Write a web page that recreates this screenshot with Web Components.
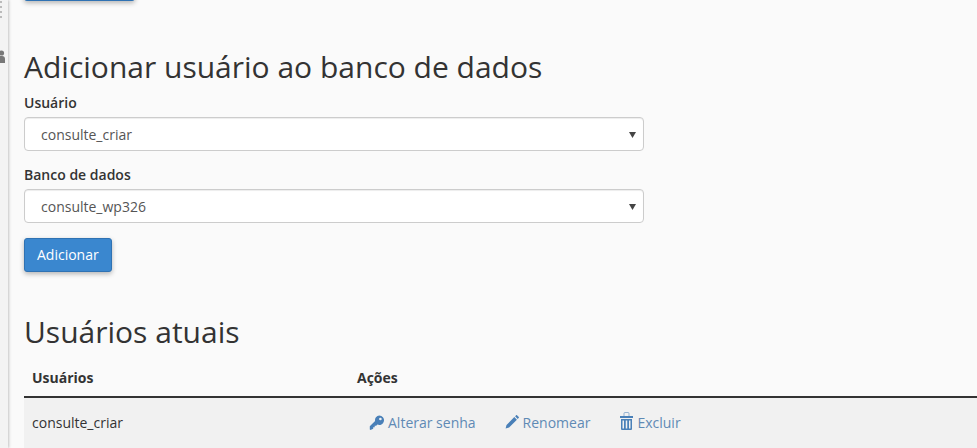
<!DOCTYPE html>
<html lang="pt"><head><meta charset="utf-8"><title>Usuários</title>
<style>
html,body{margin:0;height:100%;overflow:hidden}
body{font-family:"Open Sans",sans-serif;color:#333;background:#fafafa}
</style></head><body>
<app-shell>
  <side-rail slot="rail"></side-rail>
  <blue-button class="top" clip></blue-button>
  <section-title style="--mt:48px">Adicionar usuário ao banco de dados</section-title>
  <select-field label="Usuário" value="consulte_criar" style="--mt:8px"></select-field>
  <select-field label="Banco de dados" value="consulte_wp326" style="--mt:14px"></select-field>
  <blue-button style="--mt:15px">Adicionar</blue-button>
  <section-title style="--mt:42px">Usuários atuais</section-title>
  <users-table></users-table>
</app-shell>
<script>
function def(name,html,init){customElements.define(name,class extends HTMLElement{connectedCallback(){if(this.shadowRoot)return;const r=this.attachShadow({mode:"open"});r.innerHTML=typeof html==="function"?html(this):html;}});}
def("app-shell",`<style>:host{display:flex;height:448px;width:977px;overflow:hidden}
main{flex:1;min-width:0;padding-left:16px;display:flex;flex-direction:column;align-items:flex-start}</style>
<slot name="rail"></slot><main><slot></slot></main>`);
def("side-rail",`<style>:host{display:block;flex:none;width:8px;background:#f3f3f3;box-shadow:1px 0 3px rgba(0,0,0,.22);overflow:hidden;color:#666}
svg{display:block;margin-top:0}</style>
<svg width="8" height="66" viewBox="0 0 8 66" fill="#777"><g fill="#bbb"><rect x="0" y="1" width="2" height="2"/><rect x="0" y="6" width="2" height="2"/><rect x="0" y="11" width="2" height="2"/><rect x="0" y="16" width="2" height="2"/></g><circle cx="1.500" cy="53" r="2.600"/><path d="M-2 63v-4q0-3 3-3h1q3 0 3 3v4z"/></svg>`);
def("blue-button",h=>{const clip=h.hasAttribute("clip");return `<style>:host{display:block;margin-top:var(--mt,0)}
button{display:block;box-sizing:border-box;font:14px/20px "Open Sans",sans-serif;color:#fff;background:#3a87cf;border:1px solid #2f72b3;border-radius:3px;box-shadow:0 2px 5px rgba(0,0,0,.28);padding:6px 12px;height:34px;${clip?"width:111px;margin-top:-33px":""}}</style><button><slot></slot></button>`});
def("section-title",`<style>:host{display:block;margin-top:var(--mt,0);font-size:30px;line-height:36px;font-weight:400;color:#333;white-space:nowrap}</style><slot></slot>`);
def("select-field",h=>`<style>:host{display:block;width:620px;margin-top:var(--mt,0)}
label{display:block;font-size:14px;line-height:20px;font-weight:600;color:#333;margin-bottom:4px}
.box{box-sizing:border-box;height:34px;background:#fff;border:1px solid #ccc;border-radius:4px;box-shadow:inset 0 1px 1px rgba(0,0,0,.075);display:flex;align-items:center;justify-content:space-between;padding:1px 7px 0 16px;font-size:14px;color:#555}
svg{display:block}</style><label>${h.getAttribute("label")}</label><div class="box"><span>${h.getAttribute("value")}</span><svg width="7" height="6" viewBox="0 0 7 6"><path d="M0 0h7L3.500 6z" fill="#444"/></svg></div>`);
def("action-link",h=>`<style>:host{display:inline-flex;align-items:center;gap:4px;color:#5f8ab5;font-size:14px;line-height:20px}
::slotted(svg){display:block;fill:#4a80b8}</style><slot name="icon"></slot><slot></slot>`);
def("users-table",`<style>:host{display:block;width:953px;margin-top:8px;font-size:14px;color:#333}
.row{display:grid;grid-template-columns:325px 1fr;padding-left:8px}
.head{height:38px;align-items:center;font-weight:700;border-bottom:2px solid #333}
.body{box-sizing:border-box;height:50px;padding-bottom:1px;align-items:center;background:#f1f1f1}
.acts{display:flex;gap:29px;padding-left:12px;align-items:center;height:20px}
svg{display:block;fill:#4a80b8}</style>
<div class="row head"><span>Usuários</span><span>Ações</span></div>
<div class="row body"><span>consulte_criar</span><div class="acts">
<action-link><svg slot="icon" width="15" height="16" viewBox="-.5 0 15 16"><path fill-rule="evenodd" d="M9.800.5a4.700 4.700 0 1 1-1.900 9l-1.200 1.300H5.200v1.500H3.700v1.500L1 15l-.7-.5v-3.300l5.300-5.100A4.700 4.700 0 0 1 9.800.5zm1.100 2.200a1.300 1.300 0 1 0 0 2.600 1.300 1.300 0 0 0 0-2.600z"/></svg>Alterar senha</action-link>
<action-link style="margin-left:-1px"><svg slot="icon" width="15" height="15" viewBox="-1 1 15 15"><path d="M11.600.8l2.600 2.600-1.500 1.500-2.600-2.600zM9.300 3.100l2.600 2.600-7.800 7.800-3.500.9.900-3.500z"/></svg>Renomear</action-link>
<action-link><svg slot="icon" width="14" height="19" viewBox="0 0 14 19" style="margin-bottom:5px"><path d="M5 5V2.500a1 1 0 0 1 1-1h3a1 1 0 0 1 1 1V5" fill="none" stroke="#4a80b8" stroke-width="1" opacity=".55"/><path d="M1 5h13v2H1z"/><path fill-rule="evenodd" d="M2 8h11v10a1 1 0 0 1-1 1H3a1 1 0 0 1-1-1zM3.500 9.500v8H5v-8zM6.750 9.500v8h1.500v-8zM10 9.500v8h1.500v-8z"/></svg>Excluir</action-link>
</div></div>`);
</script></body></html>
